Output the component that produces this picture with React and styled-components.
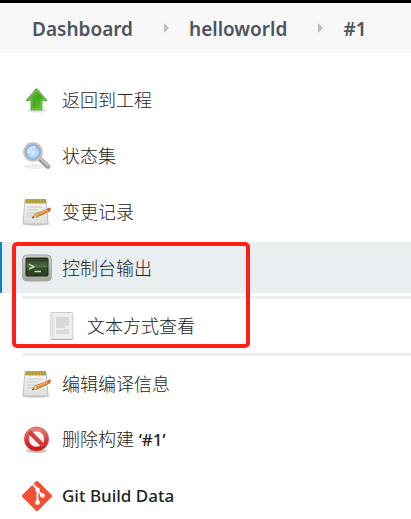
import React from "react";
import styled, { createGlobalStyle } from "styled-components";

const GlobalStyle = createGlobalStyle`
  * { box-sizing: border-box; }
  html { scrollbar-width: none; }
  body {
    margin: 0;
    background: #fff;
    color: #222;
    font-family: "Noto Sans", "Noto Sans CJK SC", sans-serif;
  }
`;

const Page = styled.div`
  border-top: 3px solid #000;
`;

const Breadcrumbs = styled.nav`
  display: flex;
  align-items: center;
  height: 50px;
  padding: 2px 32px 0;
  background: #f8f8f8;
`;

const Crumb = styled.a`
  color: #4d545d;
  font-family: "Noto Sans", sans-serif;
  font-size: 19px;
  font-weight: 600;
  line-height: 26px;
  text-decoration: none;
  white-space: nowrap;
`;

const Separator = styled.svg`
  flex: none;
  width: 5px;
  height: 10px;
  margin: 0 20px 2px 31px;
  fill: #bdbdbd;
`;

const Tasks = styled.main`
  display: flex;
  flex-direction: column;
  gap: 5px;
  padding-top: 21px;
`;

const Task = styled.a`
  display: flex;
  align-items: center;
  gap: 10px;
  height: ${({ $nested }) => ($nested ? "54px" : "51px")};
  padding-left: ${({ $nested }) => ($nested ? "25px" : "20px")};
  border-left: ${({ $nested }) => ($nested ? "0" : "2px solid transparent")};
  border-left-color: ${({ $active }) => ($active ? "#0b83ce" : "transparent")};
  background: ${({ $active }) => ($active ? "#e9eef1" : "transparent")};
  color: #222;
  text-decoration: none;
`;

const Label = styled.span`
  font-family: "Noto Sans", "Noto Sans CJK SC", sans-serif;
  font-size: ${({ $latin }) => ($latin ? "17px" : "18px")};
  font-weight: ${({ $latin }) => ($latin ? 500 : 300)};
  line-height: 26px;
  white-space: nowrap;
`;

const Strong = styled.span`
  font-size: 17px;
  font-weight: 500;
`;

const Icon = styled.svg`
  flex: none;
  width: 30px;
  height: 30px;
`;

const ConsoleGroup = styled.section`
  position: relative;
`;

const Subtasks = styled.div`
  margin: 3px 0 -3px 22px;
  border-top: 3px solid #e9eef1;
  border-bottom: 3px solid #e9eef1;
`;

const Highlight = styled.div`
  position: absolute;
  top: 0;
  left: 12px;
  width: 238px;
  height: 106px;
  border: 4px solid #ff1f16;
  border-radius: 5px;
  pointer-events: none;
`;

function Chevron() {
  return (
    <Separator viewBox="0 0 5 10" aria-hidden="true">
      <path d="M0 0 5 5 0 10Z" />
    </Separator>
  );
}

function UpIcon() {
  return (
    <Icon viewBox="0 0 30 30" aria-hidden="true">
      <defs>
        <linearGradient id="up" x1="0" y1="0" x2="1" y2="1">
          <stop offset="0" stopColor="#84cf55" />
          <stop offset=".5" stopColor="#43a51c" />
          <stop offset="1" stopColor="#72d22d" />
        </linearGradient>
      </defs>
      <ellipse cx="15" cy="25.5" rx="10" ry="2" fill="#e4e4e4" />
      <path d="M14.5 3.5 25 15.5H20V25H9V15.5H4Z" fill="url(#up)" stroke="#4b9a2c" strokeWidth=".8" strokeLinejoin="round" />
      <path d="M14.5 5 23 14.8H19V24H10V14.8H6Z" fill="none" stroke="#9ede72" strokeWidth=".7" opacity=".7" />
    </Icon>
  );
}

function SearchIcon() {
  return (
    <Icon viewBox="0 0 30 30" aria-hidden="true">
      <defs>
        <radialGradient id="lens" cx=".5" cy=".55">
          <stop offset="0" stopColor="#dceeff" />
          <stop offset="1" stopColor="#92b9ea" />
        </radialGradient>
      </defs>
      <ellipse cx="13" cy="25.5" rx="12" ry="2.5" fill="#ededed" />
      <path d="m18 18 8 7.5" stroke="#929292" strokeWidth="4.6" strokeLinecap="round" />
      <path d="m18.5 17.5 7.8 7.4" stroke="#c8c8c8" strokeWidth="2" strokeLinecap="round" />
      <circle cx="11" cy="11" r="8.6" fill="url(#lens)" stroke="#c3c3bf" strokeWidth="2.8" />
      <circle cx="11" cy="11" r="7.2" fill="none" stroke="#7fa5d6" />
      <path d="M6 12q1-6 7-6" stroke="#eff7ff" strokeWidth="2" fill="none" opacity=".7" />
    </Icon>
  );
}

function NotepadIcon() {
  return (
    <Icon viewBox="0 0 30 30" aria-hidden="true">
      <defs>
        <linearGradient id="paper" x1="0" y1="0" x2="0" y2="1">
          <stop offset="0" stopColor="#f7f7f5" />
          <stop offset="1" stopColor="#dededc" />
        </linearGradient>
      </defs>
      <ellipse cx="14" cy="27" rx="14" ry="1.8" fill="#d4d4d4" />
      <path d="M3 3h21l2 23q0 1-1 1H2q-1 0-1-1Z" fill="url(#paper)" stroke="#b4b4ae" strokeWidth=".8" />
      <path d="M3.5 2h20l.6 4.5H3Z" fill="#c2ac49" />
      <path d="M5 2v4m3-4v4m3-4v4m3-4v4m3-4v4m3-4v4m3-4v4" stroke="#94852f" strokeWidth=".8" />
      <path d="M5 10h15M5 13h11M5 16h13M5 19h6" stroke="#c9c9c9" strokeWidth="1" />
      <path d="m10 21 3-4 13-5 2 2-13 6Z" fill="#e59632" stroke="#995718" strokeWidth=".6" />
      <path d="m13 18 12-5" stroke="#f6b968" strokeWidth="1" />
      <path d="m25 12 2-1.5q2 .2 2 2L27.5 14.5Z" fill="#dc5946" />
      <path d="m10 21 3-4 2 3.2Z" fill="#d9c093" />
      <path d="m10 21 1.2-2 .9 1.6Z" fill="#333" />
    </Icon>
  );
}

function TerminalIcon() {
  return (
    <Icon viewBox="0 0 30 30" aria-hidden="true">
      <defs>
        <linearGradient id="screen" x1="0" y1="0" x2="0" y2="1">
          <stop offset="0" stopColor="#263a20" />
          <stop offset=".5" stopColor="#53724a" />
          <stop offset=".55" stopColor="#304c29" />
          <stop offset="1" stopColor="#263d21" />
        </linearGradient>
        <linearGradient id="case" x1="0" y1="0" x2="0" y2="1">
          <stop offset="0" stopColor="#cfd0cc" />
          <stop offset="1" stopColor="#a2a49e" />
        </linearGradient>
      </defs>
      <rect x=".7" y="2" width="28.6" height="26" rx="4" fill="url(#case)" stroke="#a3a59f" />
      <rect x="4" y="5" width="22" height="18" rx="1" fill="url(#screen)" stroke="#20291d" />
      <path d="m7 11 5 2.8L7 16M12.5 18.5H19" fill="none" stroke="#cbdcc3" strokeWidth="1.4" />
      <path d="M20 25.5h2" stroke="#91cb36" strokeWidth="1.5" />
    </Icon>
  );
}

function DocumentIcon() {
  return (
    <Icon viewBox="0 0 30 30" aria-hidden="true">
      <rect x="3.8" y="1.5" width="22" height="27" rx="1" fill="#eee" stroke="#ccc" />
      <path d="M4 28.3h21.5" stroke="#aaa" />
      <path d="M6 3v23" stroke="#dcdcdc" />
      <path d="M9 6h13v9H18v2H9ZM9 19h8v-1h5v5H9Z" fill="#d8d8d8" />
    </Icon>
  );
}

function ForbiddenIcon() {
  return (
    <Icon viewBox="0 0 30 30" aria-hidden="true">
      <defs>
        <linearGradient id="stop" x1="0" y1="0" x2="0" y2="1">
          <stop offset="0" stopColor="#e98080" />
          <stop offset=".5" stopColor="#d83e3e" />
          <stop offset="1" stopColor="#cc1717" />
        </linearGradient>
      </defs>
      <ellipse cx="14.5" cy="26" rx="11" ry="2" fill="#ccc" />
      <circle cx="14.5" cy="14" r="10" fill="#f6f3f2" stroke="url(#stop)" strokeWidth="4.5" />
      <path d="m7.5 7 14 14" stroke="#d93a3a" strokeWidth="4.2" />
      <circle cx="14.5" cy="14" r="12" fill="none" stroke="#cf5656" strokeWidth=".7" />
    </Icon>
  );
}

function GitIcon() {
  return (
    <Icon viewBox="0 0 30 30" aria-hidden="true">
      <path d="M13.7.6q1.3-1.2 2.6 0l13.1 13.1q1.2 1.3 0 2.6L16.3 29.4q-1.3 1.2-2.6 0L.6 16.3q-1.2-1.3 0-2.6Z" fill="#f05033" />
      <path d="m10.5 3 5 5v14M15.5 9.5l5 5" fill="none" stroke="#fff" strokeWidth="1.9" />
      <circle cx="15.5" cy="8.8" r="2.3" fill="#fff" />
      <circle cx="20.5" cy="14.5" r="2.3" fill="#fff" />
      <circle cx="15.5" cy="21.5" r="2.4" fill="#fff" />
    </Icon>
  );
}

export default function App() {
  return (
    <>
      <GlobalStyle />
      <Page>
        <Breadcrumbs aria-label="Breadcrumb">
          <Crumb href="#dashboard">Dashboard</Crumb>
          <Chevron />
          <Crumb href="#helloworld">helloworld</Crumb>
          <Chevron />
          <Crumb href="#build">#1</Crumb>
        </Breadcrumbs>
        <Tasks>
          <Task href="#project"><UpIcon /><Label>返回到工程</Label></Task>
          <Task href="#status"><SearchIcon /><Label>状态集</Label></Task>
          <Task href="#changes"><NotepadIcon /><Label>变更记录</Label></Task>
          <ConsoleGroup>
            <Task href="#console" $active aria-current="page"><TerminalIcon /><Label>控制台输出</Label></Task>
            <Subtasks>
              <Task href="#text" $nested><DocumentIcon /><Label>文本方式查看</Label></Task>
            </Subtasks>
            <Highlight />
          </ConsoleGroup>
          <Task href="#edit"><NotepadIcon /><Label>编辑编译信息</Label></Task>
          <Task href="#delete"><ForbiddenIcon /><Label>删除构建 <Strong>‘#1’</Strong></Label></Task>
          <Task href="#git"><GitIcon /><Label $latin>Git Build Data</Label></Task>
        </Tasks>
      </Page>
    </>
  );
}
